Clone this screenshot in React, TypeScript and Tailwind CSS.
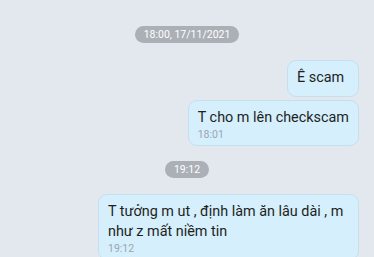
import React from 'react';

function TimePill({ label }: { label: string }) {
  return (
    <div className="flex justify-center">
      <span className="bg-[#abb0b6] text-white rounded-full h-[17px] px-[9px] text-[10.5px] leading-[17px]">
        {label}
      </span>
    </div>
  );
}

function Bubble({ text, time }: { text: string; time?: string }) {
  return (
    <div className="flex justify-end pr-[15px]">
      <div className="bg-[#d5effd] border border-[#c6dfee] rounded-[9px] pl-[9px] pr-[9px] pt-[7px] pb-[3px] min-w-[72px] max-w-[261px] text-[#1e1f21]">
        <p className="text-[14.4px] leading-[20px] pb-[5px]">{text}</p>
        {time && <p className="text-[10.5px] leading-[12px] text-[#9ba5b0] -mt-[4px] pb-[1px]">{time}</p>}
      </div>
    </div>
  );
}

export default function App() {
  return (
    <div
      className="w-[374px] h-[257px] overflow-hidden bg-[#e3e8ef] pt-[26px]"
      style={{ fontFamily: 'Roboto, "Noto Sans", sans-serif' }}
    >
      <TimePill label="18:00, 17/11/2021" />
      <div className="mt-[17px] flex flex-col gap-[3px]">
        <Bubble text="Ê scam" />
        <Bubble text="T cho m lên checkscam" time="18:01" />
      </div>
      <div className="mt-[15px]">
        <TimePill label="19:12" />
      </div>
      <div className="mt-[16px]">
        <Bubble text="T tưởng m ut , định làm ăn lâu dài , m như z mất niềm tin" time="19:12" />
      </div>
    </div>
  );
}
